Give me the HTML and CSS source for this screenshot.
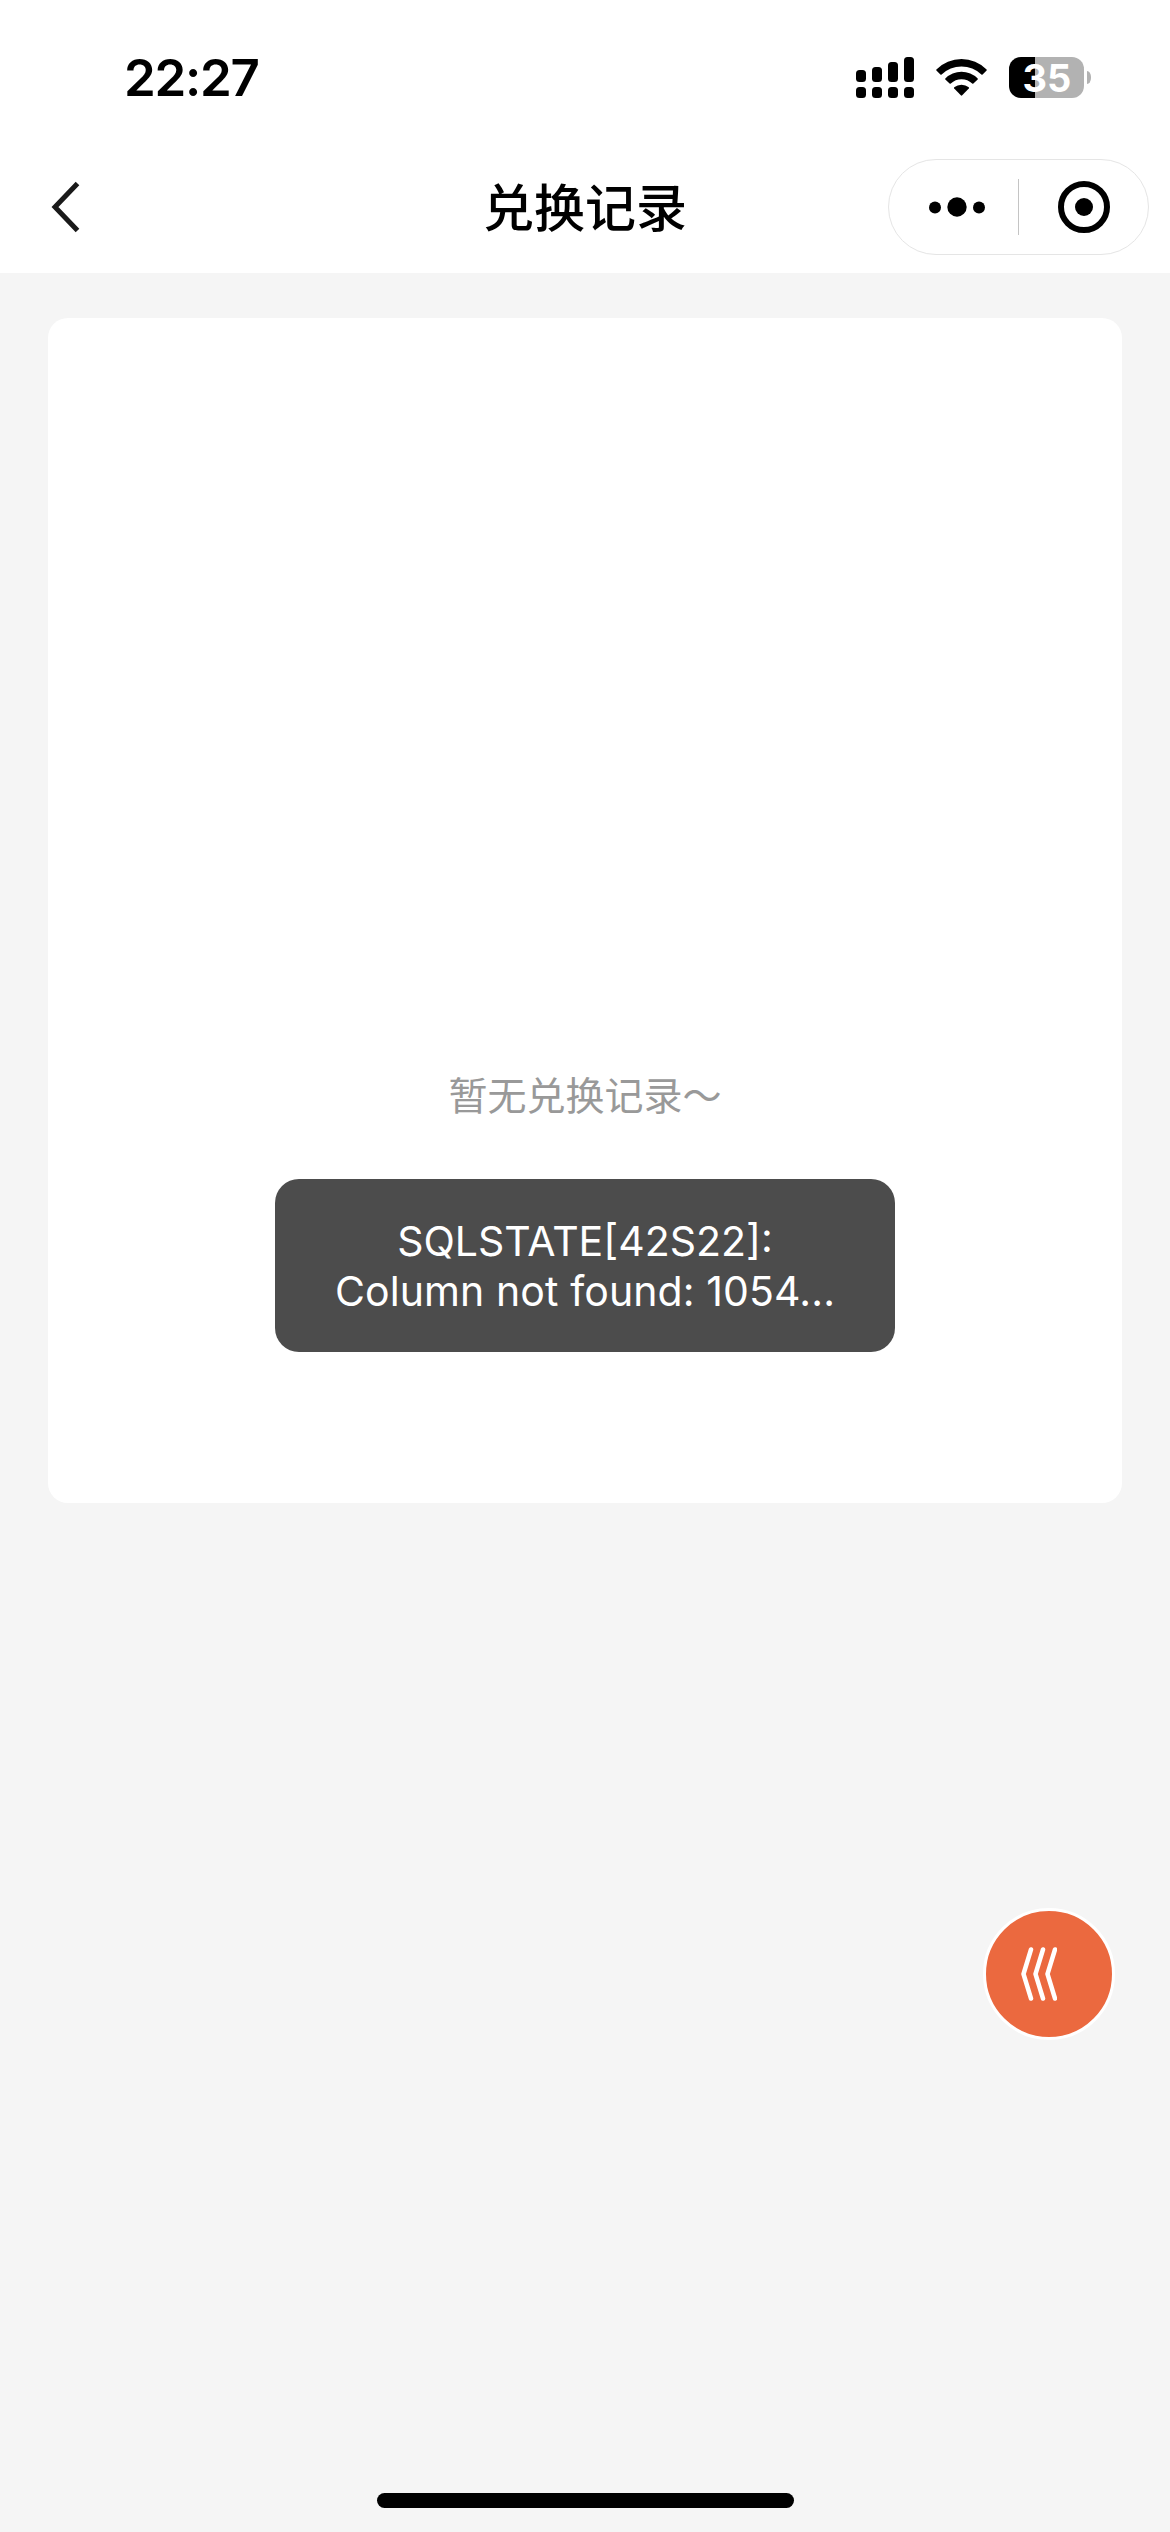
FILE: index.html
```html
<!DOCTYPE html>
<html lang="zh-CN">
<head>
  <meta charset="UTF-8">
  <meta name="viewport" content="width=device-width, initial-scale=1">
  <title>兑换记录</title>
  <link rel="stylesheet" href="styles.css">
</head>
<body>
  <header>
    <!-- 状态栏 -->
    <div class="status-bar">
      <span class="time">22:27</span>
      <div class="status-icons">
        <svg class="signal" width="58" height="41" viewBox="0 0 58 41">
          <rect x="0" y="13" width="10" height="12" rx="3.5"/>
          <rect x="16" y="10" width="10" height="15" rx="3.5"/>
          <rect x="32" y="5" width="10" height="20" rx="3.5"/>
          <rect x="48" y="0" width="10" height="25" rx="3.5"/>
          <rect x="0" y="30" width="10" height="11" rx="3.5"/>
          <rect x="16" y="30" width="10" height="11" rx="3.5"/>
          <rect x="32" y="30" width="10" height="11" rx="3.5"/>
          <rect x="48" y="30" width="10" height="11" rx="3.5"/>
        </svg>
        <svg class="wifi" width="51" height="37" viewBox="0 0 51 37">
          <path d="M0.4 10.4 A35.5 35.5 0 0 1 50.6 10.4 Q51 11 50.6 11.6 L46.6 15.6 Q46 16 45.4 15.6 A28.5 28.5 0 0 0 5.6 15.6 Q5 16 4.4 15.6 L0.4 11.6 Q0 11 0.4 10.4 Z"/>
          <path d="M9.3 19.4 A23 23 0 0 1 41.7 19.4 Q42 20 41.7 20.5 L37.4 24.6 Q36.8 25 36.2 24.6 A15.6 15.6 0 0 0 14.8 24.6 Q14.2 25 13.6 24.6 L9.3 20.5 Q9 20 9.3 19.4 Z"/>
          <path d="M18.2 28.3 A11.5 11.5 0 0 1 32.8 28.3 Q33.2 29 32.8 29.5 L26.2 36.3 Q25.5 37 24.8 36.3 L18.2 29.5 Q17.8 29 18.2 28.3 Z"/>
        </svg>
        <div class="battery">
          <span class="battery-body">35</span>
          <span class="battery-cap"></span>
        </div>
      </div>
    </div>

    <!-- 导航栏 -->
    <div class="nav-bar">
      <svg class="back" width="30" height="52" viewBox="0 0 30 52">
        <path d="M27.5 2.5 L5 26 L27.5 49.5"/>
      </svg>
      <h1>兑换记录</h1>
      <div class="capsule">
        <svg class="more" width="56" height="20" viewBox="0 0 56 20">
          <circle cx="6" cy="10.5" r="6"/>
          <circle cx="28" cy="10" r="9.7"/>
          <circle cx="50" cy="10.5" r="6"/>
        </svg>
        <span class="divider"></span>
        <svg class="close" width="52" height="52" viewBox="0 0 52 52">
          <circle class="ring" cx="26" cy="26" r="23"/>
          <circle cx="26" cy="26" r="9"/>
        </svg>
      </div>
    </div>
  </header>

  <main>
    <section class="record-card">
      <p class="empty">暂无兑换记录～</p>
    </section>
  </main>

  <div class="toast">SQLSTATE[42S22]:<br><span class="toast-line">Column not found: 1054...</span></div>

  <button class="float-btn">
    <svg width="36" height="54" viewBox="0 0 36 54">
      <path d="M10 2.5 L2.5 27 L10 51.5"/>
      <path d="M22 2.5 L14.5 27 L22 51.5"/>
      <path d="M34 2.5 L26.5 27 L34 51.5"/>
    </svg>
  </button>

  <div class="home-indicator"></div>
</body>
</html>
```

FILE: styles.css
```css
* {
  box-sizing: border-box;
}
body {
  margin: 0;
  height: 2532px;
  position: relative;
  overflow: hidden;
  font-family: Inter, "Noto Sans CJK SC", sans-serif;
  background-color: #f5f5f5;
  color: #000;
}
/* 头部 */
header {
  height: 273px;
  background-color: #fff;
}
.status-bar {
  height: 141px;
  padding: 0 79px 0 124px;
  display: flex;
  justify-content: space-between;
}
.time {
  margin-top: 47px;
  font-size: 51px;
  line-height: 62px;
  font-weight: 600;
  letter-spacing: -1.3px;
}
.status-icons {
  height: 41px;
  margin-top: 57px;
  display: flex;
  align-items: center;
}
.wifi {
  margin: 0 22px;
}
/* 电池 */
.battery {
  display: flex;
  align-items: center;
  gap: 3px;
}
.battery-body {
  width: 75px;
  height: 41px;
  padding-left: 1px;
  border-radius: 12px;
  background: linear-gradient(to right, #000 26px, #b2b2b2 26px);
  color: #fff;
  font-size: 38px;
  line-height: 42px;
  font-weight: 700;
  text-align: center;
}
.battery-cap {
  width: 4px;
  height: 13px;
  border-radius: 0 4px 4px 0 / 0 6px 6px 0;
  background-color: #b2b2b2;
}
/* 导航栏 */
.nav-bar {
  height: 132px;
  padding: 0 21px 0 50px;
  display: grid;
  grid-template-columns: 261px 1fr 261px;
  align-items: center;
}
.back path {
  fill: none;
  stroke: #1a1a1a;
  stroke-width: 5;
}
h1 {
  margin: 3px 0 0 -29px;
  font-size: 51px;
  font-weight: 500;
  line-height: 74px;
  text-align: center;
}
.capsule {
  height: 96px;
  padding: 0 38px 0 40px;
  border: 1px solid #e5e5e5;
  border-radius: 48px;
  display: flex;
  align-items: center;
}
.divider {
  width: 1px;
  height: 56px;
  margin: 0 39px 0 33px;
  background-color: #c4c4c4;
}
.ring {
  fill: none;
  stroke: #000;
  stroke-width: 6;
}
/* 记录列表 */
main {
  padding: 45px 48px;
}
.record-card {
  height: 1185px;
  padding-top: 748px;
  border-radius: 20px;
  background-color: #fff;
}
.empty {
  margin: 0;
  font-size: 39px;
  line-height: 60px;
  text-align: center;
  color: #999;
}
/* 提示框 */
.toast {
  position: absolute;
  top: 1179px;
  left: 275px;
  width: 620px;
  height: 173px;
  padding-top: 37px;
  border-radius: 24px;
  background-color: #4c4c4c;
  color: #fff;
  font-size: 41px;
  line-height: 50px;
  text-align: center;
}
.toast-line {
  letter-spacing: 0.1px;
}
/* 悬浮按钮 */
.float-btn {
  position: absolute;
  top: 1908px;
  left: 983px;
  width: 132px;
  height: 132px;
  padding: 0 0 0 35px;
  border: 3px solid #fff;
  border-radius: 50%;
  background-color: #eb693f;
  display: flex;
  align-items: center;
}
.float-btn path {
  fill: none;
  stroke: #fff;
  stroke-width: 4.5;
  stroke-linecap: round;
  stroke-linejoin: round;
}
.home-indicator {
  position: absolute;
  bottom: 24px;
  left: 377px;
  width: 417px;
  height: 15px;
  border-radius: 8px;
  background-color: #000;
}
```
